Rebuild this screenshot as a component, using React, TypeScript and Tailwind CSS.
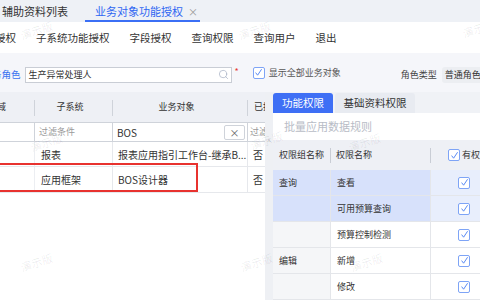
import React from "react";
import { Search } from "lucide-react";

function Check({ size = 12 }: { size?: number }) {
  return (
    <span
      className={
        (size === 12 ? "w-[12px] h-[12px]" : "w-[11px] h-[11px]") +
        " inline-flex shrink-0 items-center justify-center rounded-[2px] border border-[#7ea4f6] bg-white"
      }
    >
      <svg width="9" height="9" viewBox="0 0 9 9">
        <path d="M1.6 4.6 L3.6 7.2 L7.6 1.2" stroke="#5a8bf4" strokeWidth="1" fill="none" />
      </svg>
    </span>
  );
}

const rightRows = [
  { g: "查询", n: "查看", sel: true },
  { g: "", n: "可用预算查询", sel: true },
  { g: "", n: "预算控制检测", sel: false },
  { g: "编辑", n: "新增", sel: false },
  { g: "", n: "修改", sel: false },
];

const marks: [number, number][] = [
  [20, 22],
  [238, 22],
  [462, 20],
  [30, 134],
  [250, 132],
  [348, 134],
  [20, 254],
  [240, 254],
  [350, 254],
];

export default function App() {
  return (
    <div className="relative w-[480px] h-[300px] overflow-hidden bg-[#f0f2f6] font-['Noto_Sans_CJK_SC','Noto_Sans',sans-serif] text-[#333]">
      {/* top tabs */}
      <div className="flex h-[22px] items-stretch bg-[#eef1f6]">
        <div className="flex items-center pl-[2px] text-[11px] text-[#333]">辅助资料列表</div>
        <div className="ml-[17px] flex items-center gap-[5px] border-b-2 border-[#3b6ff5] pl-[10px] pr-[2px] pt-[2px] text-[11px] text-[#2f66f2]">
          <span>业务对象功能授权</span>
          <span className="text-[10px] text-[#999]">×</span>
        </div>
      </div>

      {/* toolbar */}
      <div className="flex h-[31px] items-center gap-[20px] whitespace-nowrap bg-white text-[10.5px] text-[#333]">
        <span className="-ml-[5px] shrink-0">授权</span>
        <span className="shrink-0">子系统功能授权</span>
        <span className="shrink-0">字段授权</span>
        <span className="shrink-0">查询权限</span>
        <span className="shrink-0">查询用户</span>
        <span className="shrink-0">退出</span>
      </div>

      {/* role row */}
      <div className="flex h-[39px] items-center whitespace-nowrap bg-[#f5f6fa] pt-[4px] text-[9px]">
        <span className="-ml-[8px] shrink-0 text-[9.5px] text-[#3b73f0]">务角色</span>
        <div className="ml-[4px] flex h-[16px] w-[207px] shrink-0 items-center justify-between border border-[#c9cdd5] bg-white pl-[3px] pr-[2px]">
          <span className="text-[9px] text-[#333]">生产异常处理人</span>
          <Search size={11} className="text-[#a3aec2]" strokeWidth={1.5} />
        </div>
        <span className="ml-[3px] -mt-[6px] shrink-0 text-[9px] text-[#e53935]">*</span>
        <span className="ml-[14px] -mt-[4px] flex shrink-0">
          <Check size={12} />
        </span>
        <span className="ml-[4px] -mt-[4px] shrink-0 text-[9px] text-[#555]">显示全部业务对象</span>
        <span className="ml-[60px] shrink-0 text-[9px] text-[#444]">角色类型</span>
        <span className="ml-[5px] flex h-[16px] w-[70px] shrink-0 items-center rounded-[3px] bg-[#eceef2] pl-[3px] text-[9px] text-[#333]">
          普通角色
        </span>
      </div>

      {/* main area */}
      <div className="relative flex h-[208px]">
        {/* left table */}
        <div className="flex w-[265px] shrink-0 flex-col bg-white">
          {/* header */}
          <div className="flex h-[30px] items-center bg-[#eef0f5] text-[9px] text-[#333]">
            <div className="relative flex h-full w-[35px] items-center overflow-hidden">
              <span className="-ml-[12px] whitespace-nowrap">领域</span>
              <span className="absolute right-0 top-[8px] h-[16px] w-px bg-[#cfd3da]" />
            </div>
            <div className="relative flex h-full w-[78px] items-center justify-center pr-[8px]">
              <span>子系统</span>
              <span className="absolute right-0 top-[8px] h-[16px] w-px bg-[#cfd3da]" />
            </div>
            <div className="relative flex h-full w-[135px] items-center justify-center pr-[8px]">
              <span>业务对象</span>
              <span className="absolute right-0 top-[8px] h-[16px] w-px bg-[#cfd3da]" />
            </div>
            <div className="flex h-full w-[17px] items-center overflow-hidden pl-[6px]">
              <span className="whitespace-nowrap">已授权</span>
            </div>
          </div>
          {/* filter row */}
          <div className="flex h-[20px] border-y border-[#cfd3da] text-[9px]">
            <div className="w-[35px] border-r border-[#cfd3da]" />
            <div className="flex w-[78px] items-center border-r border-[#cfd3da] pl-[4px] text-[#999]">过滤条件</div>
            <div className="flex w-[135px] items-center justify-between border-r border-[#cfd3da] pl-[4px] pr-[2px] text-[#333]">
              <span className="text-[10px]">BOS</span>
              <span className="flex h-[15px] w-[21px] items-center justify-center rounded-[2px] border border-[#cfd3da] text-[10px] text-[#666]">
                ×
              </span>
            </div>
            <div className="flex w-[17px] items-center overflow-hidden pl-[2px] text-[#999]">
              <span className="whitespace-nowrap">过滤</span>
            </div>
          </div>
          {/* rows */}
          {[
            { s: "报表", o: "报表应用指引工作台-继承B...", h: "h-[25px]" },
            { s: "应用框架", o: "BOS设计器", h: "h-[26px]" },
          ].map((r, i) => (
            <div key={i} className={r.h + " flex border-b border-[#e6e8ec] text-[10px] text-[#333]"}>
              <div className="w-[35px] border-r border-[#eceef2]" />
              <div className="flex w-[78px] items-center border-r border-[#e6e8ec] pl-[6px]">{r.s}</div>
              <div className="flex w-[135px] items-center overflow-hidden whitespace-nowrap border-r border-[#e6e8ec] pl-[5px]">
                {r.o}
              </div>
              <div className="flex w-[17px] items-center pl-[5px]">否</div>
            </div>
          ))}
        </div>

        {/* scroll strip */}
        <div className="flex w-[8px] shrink-0 justify-center bg-[#eef0f4] pt-[46px] text-[7px] leading-none text-[#bbb]">
          ^
        </div>

        {/* right panel */}
        <div className="flex flex-1 flex-col">
          <div className="flex h-[21px] shrink-0 items-end gap-[2px]">
            <div className="flex h-[20px] w-[60px] items-center justify-center rounded-t-[3px] bg-[#3e6ff5] text-[10.5px] text-white">
              功能权限
            </div>
            <div className="flex h-[20px] w-[80px] items-center justify-center rounded-t-[3px] bg-[#e8ebf1] text-[10.5px] text-[#333]">
              基础资料权限
            </div>
          </div>
          <div className="flex flex-1 flex-col bg-white">
            <div className="flex h-[27px] items-center pl-[11px] text-[11px] text-[#b8bcc6]">批量应用数据规则</div>
            <div className="flex h-[30px] items-center bg-[#eef0f5] text-[9px] text-[#333]">
              <div className="relative flex h-full w-[58px] items-center pl-[6px]">
                权限组名称
                <span className="absolute right-0 top-[8px] h-[15px] w-px bg-[#c9cdd5]" />
              </div>
              <div className="relative flex h-full w-[100px] items-center pl-[5px]">
                权限名称
                <span className="absolute right-0 top-[8px] h-[15px] w-px bg-[#c9cdd5]" />
              </div>
              <div className="flex h-full flex-1 items-center gap-[2px] pl-[17px]">
                <Check size={12} />
                <span className="whitespace-nowrap">有权限</span>
              </div>
            </div>
            {rightRows.map((r, i) => (
              <div key={i} className="flex h-[26px] border-b border-[#e4e6ea] text-[9px] text-[#333]">
                <div
                  className={
                    (r.sel ? "bg-[#d7e1fb]" : "bg-[#f5f6f8]") +
                    " flex w-[58px] items-center border-r border-[#e4e6ea] pl-[6px]"
                  }
                >
                  {r.g}
                </div>
                <div
                  className={
                    (r.sel ? "bg-[#d7e1fb]" : "bg-white") +
                    " flex w-[100px] items-center border-r border-[#e4e6ea] pl-[6px]"
                  }
                >
                  {r.n}
                </div>
                <div className={(r.sel ? "bg-[#e8eefc]" : "bg-white") + " flex flex-1 items-center pl-[27px]"}>
                  <Check size={12} />
                </div>
              </div>
            ))}
          </div>
        </div>

        {/* red annotation box */}
        <div className="pointer-events-none absolute left-[-4px] top-[71px] h-[29px] w-[202px] border-2 border-[#e8322f]" />
      </div>

      {/* watermarks */}
      {marks.map(([x, y], i) => (
        <span
          key={i}
          className="pointer-events-none absolute -rotate-[18deg] whitespace-nowrap text-[11px] text-black/[0.08]"
          style={{ left: x, top: y }}
        >
          演示版
        </span>
      ))}
    </div>
  );
}
